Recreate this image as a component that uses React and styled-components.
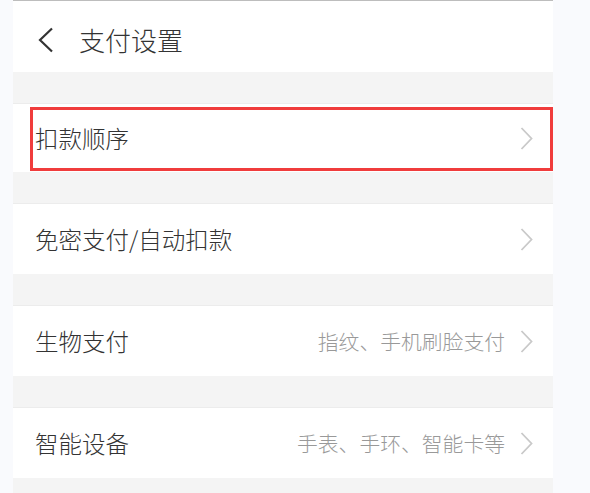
import React from "react";
import styled, { createGlobalStyle } from "styled-components";

const GlobalStyle = createGlobalStyle`
  body {
    margin: 0;
    background: #f9fafd;
    font-family: "Noto Sans CJK SC", "Noto Sans", sans-serif;
  }
`;

const Page = styled.div`
  width: 540px;
  margin-left: 13px;
  border-top: 1px solid #bdbdbd;
  background: #f4f4f4;
  min-height: 492px;
`;

const Header = styled.div`
  display: flex;
  align-items: center;
  height: 71px;
  padding: 6px 0 0 24px;
  box-sizing: border-box;
  background: #fff;
  gap: 24px;
`;

const Title = styled.div`
  font-size: 26px;
  font-weight: 300;
  color: #333;
  line-height: 1;
`;

const Gap = styled.div`
  height: 31px;
  border-bottom: 1px solid #ececec;
`;

const Row = styled.div`
  position: relative;
  display: flex;
  align-items: center;
  height: ${(p) => p.h || 70}px;
  padding: 0 20px 0 22px;
  background: #fff;
`;

const Label = styled.div`
  flex: 1;
  font-size: 23.5px;
  font-weight: 300;
  color: #333;
`;

const Hint = styled.div`
  font-size: 20.8px;
  font-weight: 300;
  color: #999;
  margin-right: 15px;
`;

const Highlight = styled.div`
  position: absolute;
  left: 17px;
  top: 3px;
  right: 0;
  bottom: 1px;
  border: 3px solid #f03c3c;
  pointer-events: none;
`;

const BackIcon = () => (
  <svg width="18" height="26" viewBox="0 0 18 26">
    <path d="M15 1.5 L3 13 L15 24.5" fill="none" stroke="#333" strokeWidth="2.2" />
  </svg>
);

const Chevron = () => (
  <svg width="13" height="23" viewBox="0 0 13 23">
    <path d="M1.5 1 L11.5 11.5 L1.5 22" fill="none" stroke="#c9c9c9" strokeWidth="1.8" />
  </svg>
);

const items = [
  { label: "扣款顺序", marked: true, h: 68 },
  { label: "免密支付/自动扣款" },
  { label: "生物支付", hint: "指纹、手机刷脸支付" },
  { label: "智能设备", hint: "手表、手环、智能卡等" },
];

export default function App() {
  return (
    <>
      <GlobalStyle />
      <Page>
        <Header>
          <BackIcon />
          <Title>支付设置</Title>
        </Header>
        {items.map((it) => (
          <React.Fragment key={it.label}>
            <Gap />
            <Row h={it.h}>
              <Label>{it.label}</Label>
              {it.hint && <Hint>{it.hint}</Hint>}
              <Chevron />
              {it.marked && <Highlight />}
            </Row>
          </React.Fragment>
        ))}
        <Gap />
      </Page>
    </>
  );
}
